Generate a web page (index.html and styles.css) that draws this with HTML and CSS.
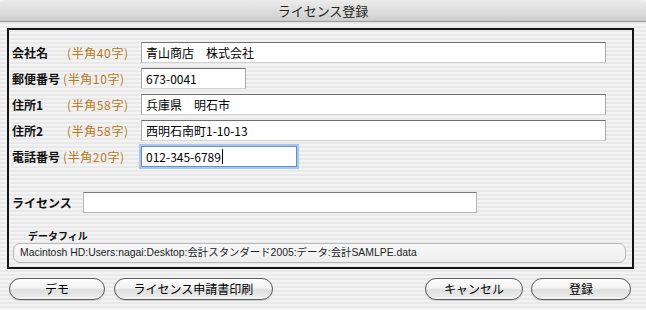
FILE: index.html
```html
<!DOCTYPE html>
<html lang="ja">
<head>
<meta charset="utf-8">
<title>ライセンス登録</title>
<link rel="stylesheet" href="styles.css">
</head>
<body>
<div class="window">
  <div class="titlebar">ライセンス登録</div>
  <div class="panel">
    <div class="form">
      <div class="row">
        <span class="label">会社名</span><span class="note">(半角40字)</span>
        <div class="field long">青山商店　株式会社</div>
      </div>
      <div class="row">
        <span class="label wide">郵便番号</span><span class="note">(半角10字)</span>
        <div class="field zip">673-0041</div>
      </div>
      <div class="row">
        <span class="label">住所1</span><span class="note">(半角58字)</span>
        <div class="field long">兵庫県　明石市</div>
      </div>
      <div class="row">
        <span class="label">住所2</span><span class="note">(半角58字)</span>
        <div class="field long">西明石南町1-10-13</div>
      </div>
      <div class="row">
        <span class="label wide">電話番号</span><span class="note">(半角20字)</span>
        <div class="field phone focus">012-345-6789<span class="caret"></span></div>
      </div>
    </div>
    <div class="license">
      <span class="label lic">ライセンス</span>
      <div class="field licfield"></div>
    </div>
    <div class="datafile">
      <div class="dlabel">データフィル</div>
      <div class="dbox">Macintosh HD:Users:nagai:Desktop:会計スタンダード2005:データ:会計SAMLPE.data</div>
    </div>
  </div>
  <div class="buttons">
    <div class="btn demo">デモ</div>
    <div class="btn print">ライセンス申請書印刷</div>
    <div class="btn cancel">キャンセル</div>
    <div class="btn ok">登録</div>
  </div>
</div>
</body>
</html>
```
FILE: styles.css
```css
html, body {
  margin: 0;
  padding: 0;
}
body {
  width: 646px;
  height: 310px;
  overflow: hidden;
  font-family: "Noto Sans CJK JP", "Liberation Sans", sans-serif;
  color: #000;
  background: repeating-linear-gradient(to bottom, #f3f3f3 0px, #f3f3f3 2px, #e9e9e9 2px, #e9e9e9 4px);
}
.window {
  width: 646px;
  height: 310px;
  display: flex;
  flex-direction: column;
}
.titlebar {
  height: 21px;
  border-bottom: 1px solid #9a9a9a;
  background: linear-gradient(to bottom, #ececec 0%, #dcdcdc 55%, #cdcdcd 100%);
  border-top-left-radius: 6px;
  border-top-right-radius: 6px;
  text-align: center;
  font-size: 13px;
  line-height: 21px;
  color: #222;
}
.panel {
  margin: 6px 0 0 7px;
  width: 627px;
  height: 241px;
  box-sizing: border-box;
  border: 2px solid #151515;
  padding: 12px 0 0 3px;
  display: flex;
  flex-direction: column;
}
.form {
  display: flex;
  flex-direction: column;
  gap: 5px;
}
.row {
  display: flex;
  align-items: center;
  height: 21px;
}
.form .row {
  width: 594px;
}
.label {
  font-size: 12px;
  font-weight: 700;
  min-width: 51px;
  margin-right: 4px;
  white-space: nowrap;
  color: #111;
}
.label.wide {
  min-width: 0;
  margin-right: 3px;
}
.note {
  font-size: 12px;
  color: #b5791a;
  letter-spacing: 0.6px;
  white-space: nowrap;
}
.field {
  box-sizing: border-box;
  height: 21px;
  background: #fff;
  border: 1px solid #a9a9a9;
  border-top-color: #6e6e6e;
  border-bottom-color: #d0d0d0;
  font-size: 12px;
  line-height: 19px;
  padding-left: 4px;
  white-space: nowrap;
  display: flex;
  align-items: center;
}
.row .field {
  margin-left: auto;
}
.field.long { width: 465px; }
.field.zip { width: 105px; margin-right: 360px; }
.field.phone { width: 156px; margin-right: 309px; }
.field.focus {
  border: 1px solid #5f8fcf;
  box-shadow: 0 0 0 2px #a9c7ee;
}
.caret {
  display: inline-block;
  width: 1px;
  height: 15px;
  background: #000;
  margin-left: 1px;
}
.license {
  display: flex;
  align-items: center;
  margin-top: 25px;
  height: 21px;
}
.label.lic {
  min-width: 0;
  width: 71px;
  margin-right: 0;
}
.licfield {
  width: 394px;
  border-color: #b5b5b5;
  border-top-color: #7a7a7a;
}
.datafile {
  margin-top: 17px;
  padding-left: 1px;
}
.dlabel {
  font-size: 10px;
  font-weight: 700;
  margin-left: 15px;
  line-height: 12px;
  height: 12px;
  color: #111;
}
.dbox {
  margin-top: 1px;
  width: 613px;
  height: 20px;
  box-sizing: border-box;
  border: 1px solid #b8b8b8;
  border-radius: 7px;
  background: linear-gradient(to bottom, #f8f8f8, #eeeeee);
  font-family: "Liberation Sans", "Noto Sans CJK JP", sans-serif;
  font-size: 10.4px;
  line-height: 18px;
  padding-left: 6px;
  color: #222;
  white-space: nowrap;
}
.buttons {
  display: flex;
  margin-top: 9px;
  padding-left: 9px;
  gap: 9px;
}
.btn {
  box-sizing: border-box;
  height: 22px;
  border: 1px solid #5a5a5a;
  border-radius: 11px;
  background: linear-gradient(to bottom, #ffffff 0%, #f2f2f2 45%, #dedede 55%, #e9e9e9 85%, #f6f6f6 100%);
  box-shadow: 0 1px 1px rgba(0,0,0,0.15);
  font-size: 12px;
  line-height: 20px;
  text-align: center;
  white-space: nowrap;
}
.btn.demo { width: 96px; }
.btn.print { width: 159px; }
.btn.cancel { width: 98px; margin-left: 143px; }
.btn.ok { width: 100px; margin-left: -1px; }
```
